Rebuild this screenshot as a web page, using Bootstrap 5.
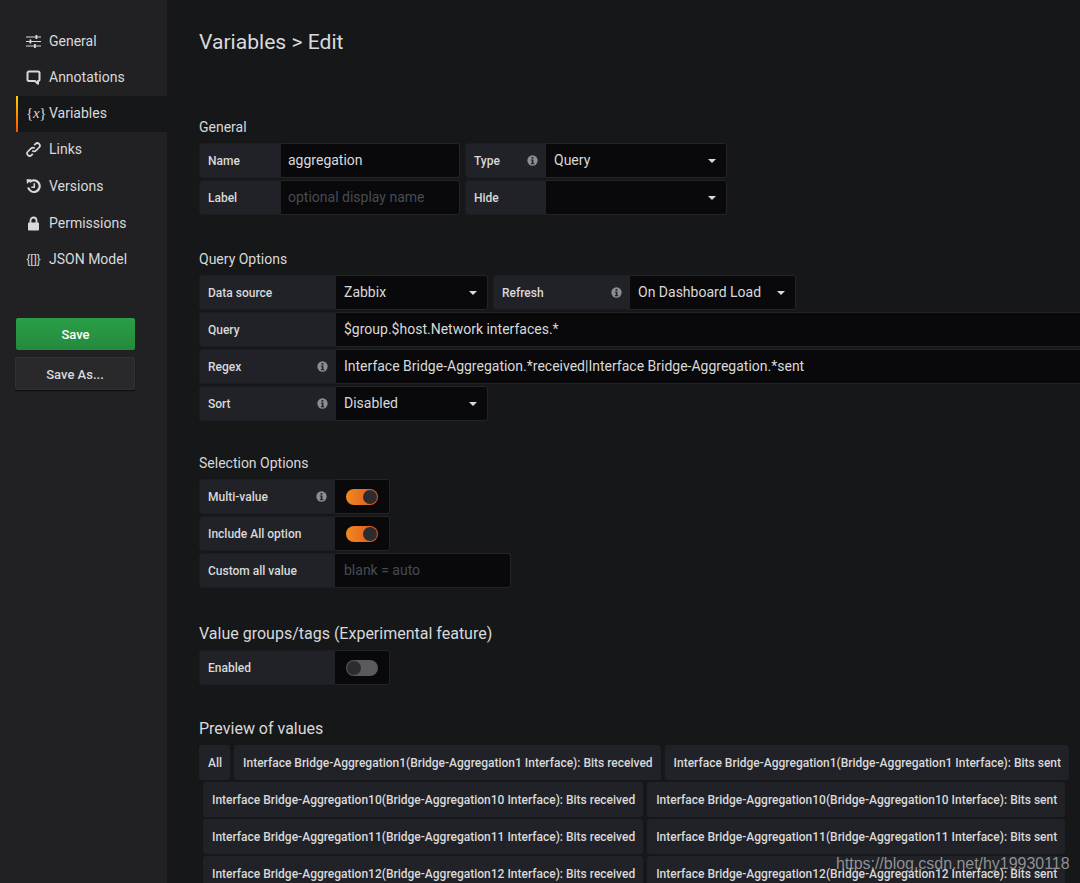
<!DOCTYPE html>
<html lang="en">
<head>
<meta charset="utf-8">
<title>Variables &gt; Edit</title>
<link rel="stylesheet" href="https://cdn.jsdelivr.net/npm/bootstrap@5.3.0/dist/css/bootstrap.min.css">
<style>
html,body{height:883px;overflow:hidden}
body{background:#161719;color:#d8d9da;font-family:Roboto,"Liberation Sans",sans-serif;font-size:14px;position:relative}
.shell{height:883px}
.side{width:167px;flex:none;background:#212124;padding:23px 0 0 16px}
.side-item{height:36px;color:#d8d9da;padding-left:10px;gap:8px;text-decoration:none;font-size:14px}
.side-item svg,.side-ico{width:15px;height:15px;flex:none}
.side-ico{font:15px/15px "Liberation Serif",serif;text-align:center;letter-spacing:-.3px;margin:0;white-space:nowrap}
.side-ico i{font-style:italic}
.side-ico.plain{font:12px/15px "Liberation Sans",sans-serif;font-weight:400;letter-spacing:-.2px}
.side-item.on{background:#161719;border-left:2px solid;border-image:linear-gradient(#ffd500,#ff4b00) 1;padding:0 0 2px 8px;margin:1px 0 -1px}
.side-item.nudge{margin-top:1px}
.btn-save,.btn-saveas{display:block;width:119px;font:500 13px/1 Roboto,sans-serif;padding:1px 0 0;border-radius:2px}
.btn-save{height:32px;margin-top:41px;background:linear-gradient(#2b9e47,#248a3d);color:#fff;border:0}
.btn-saveas{width:120px;height:33px;margin:7px 0 0 -1px;background:#29292c;color:#d8d9da;border:1px solid #333336;box-shadow:0 1px 1px #0c0c0c}
.page{flex:1;min-width:0;padding:29px 0 0 32px;overflow:hidden}
.ttl{font-size:21.1px;line-height:26px;font-weight:400;margin:0 0 63px;color:#d8d9da}
.sect{font-size:14px;line-height:18px;font-weight:400;margin:33px 0 7px;color:#d8d9da}
.sect.first{margin-top:0}
.sect.wide{margin-top:35px}
.sect.big{font-size:16px;line-height:20px;padding-top:1px;margin-bottom:6px}
.frow{gap:5px;height:35px;margin-bottom:2px}
.frow.over{width:calc(100% + 8px)}
.fgroup{height:35px}
.lbl{background:#212227;border:1px solid #1c1d20;border-right:0;border-radius:3px 0 0 3px;font-weight:500;font-size:12px;color:#d8d9da;padding:0 8px;height:35px}
.lbl svg{width:11px;height:11px;flex:none;margin-right:0}
.w82{width:82px}.w81{width:81px}.w137{width:137px}.w136{width:136px}
.form-control.fld,.form-select.fld{background-color:#09090b;border:1px solid #222426;border-left:0;border-radius:0 3px 3px 0;color:#d8d9da;font-size:14px;height:35px;padding:0 8px;box-shadow:none}
.form-control.fld{padding-bottom:2px}
.form-control.fld.w179{padding-left:7px}
.form-control.fld.w176{padding-left:9px}
.form-control.fld::placeholder{color:#464c54;opacity:1}
.form-select.fld{background-image:url("data:image/svg+xml,%3Csvg xmlns='http://www.w3.org/2000/svg' width='8' height='4'%3E%3Cpath d='M0 0h8L4 4z' fill='%23d8d9da'/%3E%3C/svg%3E");background-size:8px 4px;background-position:right 10px center;padding-right:20px}
.w179{width:179px}.w180{width:181px}.w152{width:152px}.w166{width:166px}.w176{width:176px}
.tcell{width:55px;height:35px;background:#09090b;border:1px solid #222426;border-left:0;border-radius:0 3px 3px 0}
.tog{display:block;width:32px;height:16px;border-radius:8px;background:linear-gradient(90deg,#f28b1c,#d9512c);position:relative}
.tog::after{content:"";position:absolute;right:1px;top:1px;width:14px;height:14px;border-radius:50%;background:#2c2c2f}
.tog.off{background:#5a5a5c}
.tog.off::after{right:auto;left:1px}
.tags{row-gap:2px}
.vtag{height:35px;background:#212227;border-radius:3px;font-weight:500;font-size:12px;color:#d8d9da;padding:0 8px 0 9px;margin-left:4px;white-space:nowrap}
.vtag.lead-tag{margin-left:0}
.wmark{position:absolute;left:836px;top:854px;font:16px/20px "Liberation Sans",sans-serif;letter-spacing:-.03px;color:rgba(190,190,190,.72);white-space:nowrap}
</style>
</head>
<body>
<svg width="0" height="0" class="position-absolute">
<defs>
<symbol id="inf" viewBox="0 0 12 12"><circle cx="6" cy="6" r="5.6" fill="#8e8e90"/><rect x="5" y="2.2" width="2" height="1.8" fill="#212227"/><path d="M4.2 5h2.8v3.9h1V10H4.2V8.9h1V6.1h-1z" fill="#212227"/></symbol>
</defs>
</svg>
<div class="shell d-flex">
<nav class="side">
<a class="side-item d-flex align-items-center" href="#"><svg viewBox="0 0 15 15"><path d="M0 3h15M0 7.500h15M0 12h15" stroke="#d8d9da" stroke-width="1.200"/><path d="M9.500 1h1.800v4H9.500zM3.500 5.500h1.800v4H3.500zM8 10h1.800v4H8z" fill="#d8d9da"/></svg>General</a>
<a class="side-item d-flex align-items-center" href="#"><svg viewBox="0 0 15 15"><path d="M3 1.500h9a1.500 1.500 0 0 1 1.500 1.500v6.500a1.500 1.500 0 0 1-1.500 1.500v2.800L9 11H3a1.500 1.500 0 0 1-1.500-1.500V3A1.500 1.500 0 0 1 3 1.500z" fill="none" stroke="#d8d9da" stroke-width="2" stroke-linejoin="round"/></svg>Annotations</a>
<a class="side-item on d-flex align-items-center" href="#"><span class="side-ico">{<i>x</i>}</span>Variables</a>
<a class="side-item d-flex align-items-center" href="#"><svg viewBox="0 0 15 15" fill="none" stroke="#d8d9da" stroke-width="1.700"><path d="M6.300 8.700a2.500 2.500 0 0 0 3.600 0l3.200-3.200a2.500 2.500 0 0 0-3.600-3.600L8.200 3.200"/><path d="M8.700 6.300a2.500 2.500 0 0 0-3.600 0l-3.200 3.200a2.500 2.500 0 0 0 3.600 3.600l1.300-1.300"/></svg>Links</a>
<a class="side-item nudge d-flex align-items-center" href="#"><svg viewBox="0 0 15 15" fill="none" stroke="#d8d9da" stroke-width="2.200"><path d="M3.600 3.200a5.800 5.800 0 1 1-1.400 5.300"/><path d="M0.500 0.200h5l-4.500 4.800z" fill="#d8d9da" stroke="none"/><path d="M8.300 4.300v3.900H5.300" stroke-width="1.500"/></svg>Versions</a>
<a class="side-item nudge d-flex align-items-center" href="#"><svg viewBox="0 0 15 15"><path d="M4.500 7V4.500a3 3 0 0 1 6 0V7" fill="none" stroke="#d8d9da" stroke-width="1.800"/><rect x="2" y="6.500" width="11" height="8" rx="1" fill="#d8d9da"/></svg>Permissions</a>
<a class="side-item d-flex align-items-center" href="#"><span class="side-ico plain">{[]}</span>JSON Model</a>
<button class="btn btn-save" type="button">Save</button>
<button class="btn btn-saveas" type="button">Save As...</button>
</nav>
<main class="page">
<h1 class="ttl">Variables &gt; Edit</h1>

<h2 class="sect first">General</h2>
<div class="frow d-flex">
<div class="fgroup d-flex"><div class="lbl w82 d-flex align-items-center">Name</div><input class="form-control fld w179" value="aggregation"></div>
<div class="fgroup d-flex"><div class="lbl w81 d-flex align-items-center justify-content-between">Type<svg><use href="#inf"/></svg></div><select class="form-select fld w180"><option>Query</option></select></div>
</div>
<div class="frow d-flex">
<div class="fgroup d-flex"><div class="lbl w82 d-flex align-items-center">Label</div><input class="form-control fld w179" placeholder="optional display name"></div>
<div class="fgroup d-flex"><div class="lbl w81 d-flex align-items-center">Hide</div><select class="form-select fld w180"><option></option></select></div>
</div>

<h2 class="sect wide">Query Options</h2>
<div class="frow d-flex">
<div class="fgroup d-flex"><div class="lbl w137 d-flex align-items-center">Data source</div><select class="form-select fld w152"><option>Zabbix</option></select></div>
<div class="fgroup d-flex"><div class="lbl w137 d-flex align-items-center justify-content-between">Refresh<svg><use href="#inf"/></svg></div><select class="form-select fld w166"><option>On Dashboard Load</option></select></div>
</div>
<div class="frow over d-flex">
<div class="fgroup d-flex flex-fill"><div class="lbl w137 flex-shrink-0 d-flex align-items-center">Query</div><input class="form-control fld flex-fill" value="$group.$host.Network interfaces.*"></div>
</div>
<div class="frow over d-flex">
<div class="fgroup d-flex flex-fill"><div class="lbl w137 flex-shrink-0 d-flex align-items-center justify-content-between">Regex<svg><use href="#inf"/></svg></div><input class="form-control fld flex-fill" value="Interface Bridge-Aggregation.*received|Interface Bridge-Aggregation.*sent"></div>
</div>
<div class="frow d-flex">
<div class="fgroup d-flex"><div class="lbl w137 d-flex align-items-center justify-content-between">Sort<svg><use href="#inf"/></svg></div><select class="form-select fld w152"><option>Disabled</option></select></div>
</div>

<h2 class="sect">Selection Options</h2>
<div class="frow d-flex">
<div class="fgroup d-flex"><div class="lbl w136 d-flex align-items-center justify-content-between">Multi-value<svg><use href="#inf"/></svg></div><div class="tcell d-flex align-items-center justify-content-center"><span class="tog"></span></div></div>
</div>
<div class="frow d-flex">
<div class="fgroup d-flex"><div class="lbl w136 d-flex align-items-center">Include All option</div><div class="tcell d-flex align-items-center justify-content-center"><span class="tog"></span></div></div>
</div>
<div class="frow d-flex">
<div class="fgroup d-flex"><div class="lbl w136 d-flex align-items-center">Custom all value</div><input class="form-control fld w176" placeholder="blank = auto"></div>
</div>

<h2 class="sect big wide">Value groups/tags (Experimental feature)</h2>
<div class="frow d-flex">
<div class="fgroup d-flex"><div class="lbl w136 d-flex align-items-center">Enabled</div><div class="tcell d-flex align-items-center justify-content-center"><span class="tog off"></span></div></div>
</div>

<h2 class="sect big">Preview of values</h2>
<div class="tags d-flex flex-wrap">
<div class="vtag lead-tag d-flex align-items-center">All</div>
<div class="vtag d-flex align-items-center">Interface Bridge-Aggregation1(Bridge-Aggregation1 Interface): Bits received</div>
<div class="vtag d-flex align-items-center">Interface Bridge-Aggregation1(Bridge-Aggregation1 Interface): Bits sent</div>
<div class="vtag d-flex align-items-center">Interface Bridge-Aggregation10(Bridge-Aggregation10 Interface): Bits received</div>
<div class="vtag d-flex align-items-center">Interface Bridge-Aggregation10(Bridge-Aggregation10 Interface): Bits sent</div>
<div class="vtag d-flex align-items-center">Interface Bridge-Aggregation11(Bridge-Aggregation11 Interface): Bits received</div>
<div class="vtag d-flex align-items-center">Interface Bridge-Aggregation11(Bridge-Aggregation11 Interface): Bits sent</div>
<div class="vtag d-flex align-items-center">Interface Bridge-Aggregation12(Bridge-Aggregation12 Interface): Bits received</div>
<div class="vtag d-flex align-items-center">Interface Bridge-Aggregation12(Bridge-Aggregation12 Interface): Bits sent</div>
</div>
</main>
</div>
<div class="wmark">https://blog.csdn.net/hy19930118</div>
<script src="https://cdn.jsdelivr.net/npm/bootstrap@5.3.0/dist/js/bootstrap.bundle.min.js"></script>
</body>
</html>
